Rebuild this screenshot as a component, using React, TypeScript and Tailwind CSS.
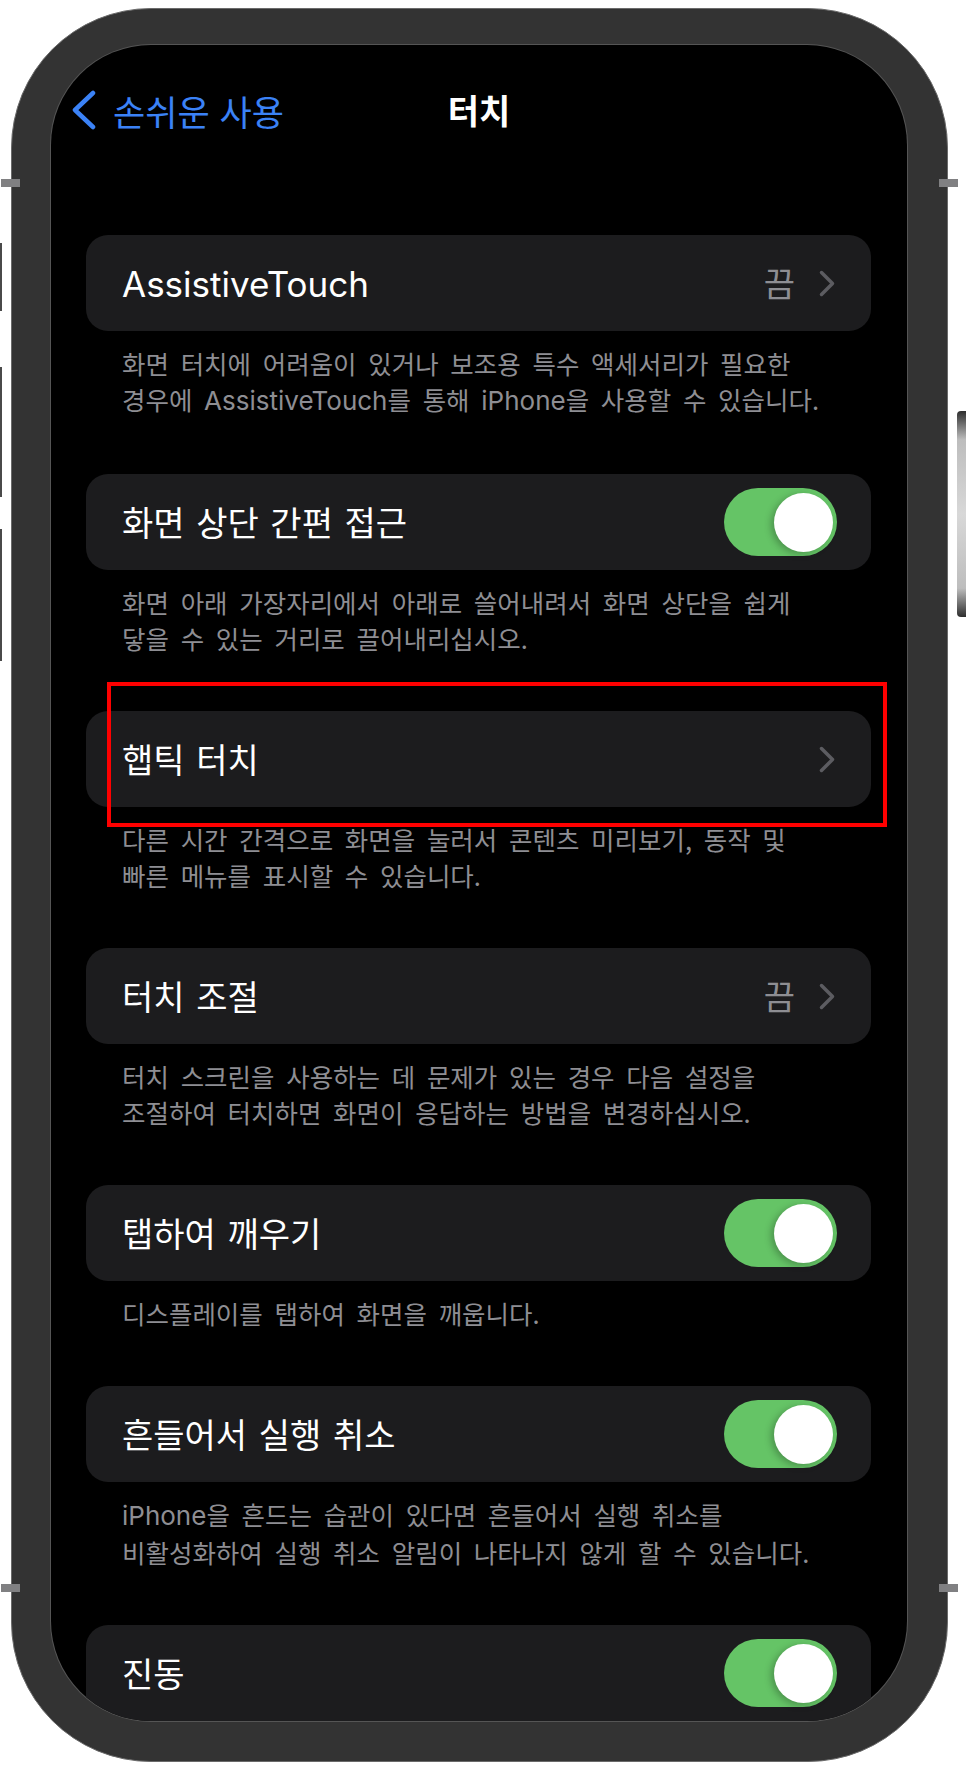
import type { ReactNode } from 'react'

const en = "font-['Inter',sans-serif]"

function En({ children }: { children: ReactNode }) {
  return <span className={`${en} text-[26px]`}>{children}</span>
}

function Chevron() {
  return (
    <svg width="16" height="27" viewBox="0 0 16 27" fill="none">
      <path d="M2.5 2.5L13.5 13.5L2.5 24.5" stroke="#5c5c61" strokeWidth="3.5" strokeLinecap="round" strokeLinejoin="round" />
    </svg>
  )
}

function Toggle() {
  return (
    <div className="flex h-[68px] w-[113px] items-center justify-end rounded-full bg-[#65c466] pr-[4px]">
      <div className="h-[59px] w-[59px] rounded-full bg-white shadow-[-3px_2px_7px_rgba(0,0,0,0.25)]" />
    </div>
  )
}

type Section = {
  title: ReactNode
  accessory: 'off' | 'chevron' | 'toggle'
  desc?: ReactNode[]
  highlight?: boolean
}

const sections: Section[] = [
  {
    title: <span className={`${en} text-[35px]`}>AssistiveTouch</span>,
    accessory: 'off',
    desc: [
      <>화면 터치에 어려움이 있거나 보조용 특수 액세서리가 필요한</>,
      <>경우에 <En>AssistiveTouch</En>를 통해 <En>iPhone</En>을 사용할 수 있습니다.</>,
    ],
  },
  {
    title: '화면 상단 간편 접근',
    accessory: 'toggle',
    desc: [<>화면 아래 가장자리에서 아래로 쓸어내려서 화면 상단을 쉽게</>, <>닿을 수 있는 거리로 끌어내리십시오.</>],
  },
  {
    title: '햅틱 터치',
    accessory: 'chevron',
    highlight: true,
    desc: [<>다른 시간 간격으로 화면을 눌러서 콘텐츠 미리보기, 동작 및</>, <>빠른 메뉴를 표시할 수 있습니다.</>],
  },
  {
    title: '터치 조절',
    accessory: 'off',
    desc: [<>터치 스크린을 사용하는 데 문제가 있는 경우 다음 설정을</>, <>조절하여 터치하면 화면이 응답하는 방법을 변경하십시오.</>],
  },
  {
    title: '탭하여 깨우기',
    accessory: 'toggle',
    desc: [<>디스플레이를 탭하여 화면을 깨웁니다.</>],
  },
  {
    title: '흔들어서 실행 취소',
    accessory: 'toggle',
    desc: [
      <><En>iPhone</En>을 흔드는 습관이 있다면 흔들어서 실행 취소를</>,
      <>비활성화하여 실행 취소 알림이 나타나지 않게 할 수 있습니다.</>,
    ],
  },
  { title: '진동', accessory: 'toggle' },
]

export default function App() {
  return (
    <div className="relative h-[1771px] w-[966px] overflow-hidden bg-white pl-[11px] pt-[8px] font-['Noto_Sans_CJK_KR',sans-serif]">
      {/* left side buttons */}
      <div className="absolute left-0 top-[243px] h-[68px] w-[2px] bg-[#4a4a4a]" />
      <div className="absolute left-0 top-[367px] h-[130px] w-[2px] bg-[#4a4a4a]" />
      <div className="absolute left-0 top-[529px] h-[132px] w-[2px] bg-[#4a4a4a]" />
      {/* power button */}
      <div className="absolute left-[957px] top-[411px] h-[206px] w-[9px] rounded-l-[4px] bg-[linear-gradient(to_bottom,#2e2e2e_0%,#bdbdbd_14%,#d8d8d8_50%,#bdbdbd_86%,#2e2e2e_100%)]" />

      <div className="relative h-[1754px] w-[937px] rounded-[140px] border border-[#6a6a6a] bg-[#333333] pb-[40px] pl-[39px] pr-[40px] pt-[36px]">
        <div className="h-full w-full overflow-hidden rounded-[100px] bg-black ring-1 ring-[#555555]">
          {/* nav bar */}
          <div className="mt-[41px] grid h-[48px] grid-cols-[1fr_auto_1fr] items-center px-[20px]">
            <div className="flex items-center gap-[17px] text-[#3b82f6]">
              <svg width="25" height="40" viewBox="0 0 25 40" fill="none">
                <path d="M22 3L4 20L22 37" stroke="currentColor" strokeWidth="4.5" strokeLinecap="round" strokeLinejoin="round" />
              </svg>
              <span className="text-[35px] leading-none [word-spacing:2px]">손쉬운 사용</span>
            </div>
            <span className="text-[34px] font-semibold leading-none text-white">터치</span>
            <div />
          </div>

          {/* settings list */}
          <div className="mt-[101px] pl-[35px] pr-[36px]">
            {sections.map((s, i) => (
              <div key={i} className="relative">
                <div className="flex h-[96px] items-center justify-between rounded-[22px] bg-[#1c1c1e] pl-[36px] pr-[34px]">
                  <span className="text-[34px] leading-[40px] text-white [word-spacing:4px]">{s.title}</span>
                  {s.accessory === 'toggle' && <Toggle />}
                  {s.accessory === 'chevron' && (
                    <div className="mr-[2px]">
                      <Chevron />
                    </div>
                  )}
                  {s.accessory === 'off' && (
                    <div className="mr-[2px] flex items-center gap-[24px]">
                      <span className="text-[34px] leading-[40px] text-[#8e8e93]">끔</span>
                      <Chevron />
                    </div>
                  )}
                </div>
                {s.desc && (
                  <div className="pb-[55px] pl-[36px] pt-[14px] text-[25.5px] leading-[36px] text-[#8e8e93] [word-spacing:6px]">
                    {s.desc.map((line, j) => (
                      <div key={j}>{line}</div>
                    ))}
                  </div>
                )}
                {s.highlight && (
                  <div className="pointer-events-none absolute left-[21px] top-[-29px] h-[145px] w-[780px] border-4 border-[#ff0000]" />
                )}
              </div>
            ))}
          </div>
        </div>
      </div>

      {/* frame tabs */}
      <div className="absolute left-[1px] top-[179px] h-[8px] w-[19px] bg-[#808082]" />
      <div className="absolute left-[1px] top-[1584px] h-[8px] w-[19px] bg-[#808082]" />
      <div className="absolute left-[939px] top-[179px] h-[8px] w-[19px] bg-[#808082]" />
      <div className="absolute left-[939px] top-[1584px] h-[8px] w-[19px] bg-[#808082]" />
    </div>
  )
}
